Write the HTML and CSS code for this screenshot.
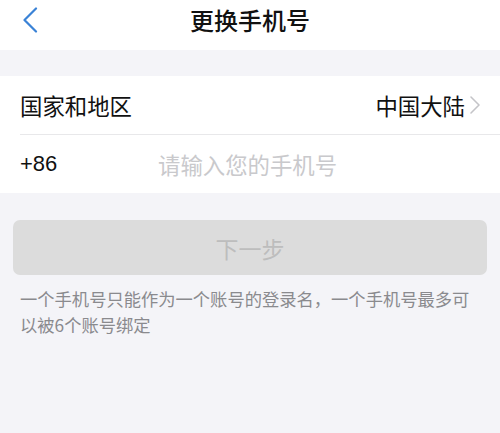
FILE: index.html
```html
<!DOCTYPE html>
<html lang="zh-CN">
<head>
    <meta charset="UTF-8">
    <meta name="viewport" content="width=device-width, initial-scale=1.0">
    <title>更换手机号</title>
    <link rel="stylesheet" href="styles.css">
</head>
<body>
    <header class="nav-bar">
        <a class="back" href="#">
            <svg width="16" height="26" viewBox="0 0 16 26">
                <path d="M14 1.5 L2.5 13 L14 24.5" fill="none" stroke="#3a82d6" stroke-width="2.2" stroke-linecap="round" stroke-linejoin="round"/>
            </svg>
        </a>
        <h1>更换手机号</h1>
    </header>

    <main>
        <section class="form-group">
            <div class="row">
                <span class="label">国家和地区</span>
                <span class="value">中国大陆
                    <svg class="chevron" width="12" height="20" viewBox="0 0 12 20">
                        <path d="M2 2 L10 10 L2 18" fill="none" stroke="#c4c4c8" stroke-width="1.6" stroke-linecap="round" stroke-linejoin="round"/>
                    </svg>
                </span>
            </div>
            <div class="row">
                <span class="label code">+86</span>
                <input class="phone-input" type="tel" placeholder="请输入您的手机号">
            </div>
        </section>

        <button class="next-button" disabled>下一步</button>

        <p class="note">一个手机号只能作为一个账号的登录名，一个手机号最多可以被6个账号绑定</p>
    </main>
</body>
</html>
```

FILE: styles.css
```css
body {
    font-family: "Noto Sans CJK SC", "Liberation Sans", sans-serif;
    margin: 0;
    padding: 0;
    background-color: #f4f4f8;
    color: #111111;
    width: 500px;
    height: 433px;
    overflow: hidden;
}

.nav-bar {
    position: relative;
    height: 50px;
    background-color: #ffffff;
    display: flex;
    align-items: center;
    justify-content: center;
}

.nav-bar h1 {
    margin: 0;
    font-size: 24px;
    font-weight: 500;
    line-height: 1;
    margin-top: -10px;
}

.back {
    position: absolute;
    left: 22px;
    top: 7px;
    display: block;
    width: 16px;
    height: 26px;
}

main {
    padding-top: 26px;
}

.form-group {
    background-color: #ffffff;
    padding-left: 20px;
}

.row {
    height: 58px;
    display: flex;
    align-items: center;
    padding-right: 20px;
    font-size: 22.4px;
}

.row + .row {
    border-top: 1px solid #e8e8ea;
}

.label {
    flex: 1;
}

.value {
    display: flex;
    align-items: center;
    gap: 4px;
}

.chevron {
    margin-right: -1px;
}

.code {
    flex: 0 0 138px;
    font-family: "Liberation Sans", sans-serif;
    font-size: 22px;
}

.phone-input {
    flex: 1;
    border: none;
    outline: none;
    padding: 0;
    font-family: "Noto Sans CJK SC", sans-serif;
    font-size: 22.4px;
    background: transparent;
}

.phone-input::placeholder {
    color: #c9c9cc;
}

.next-button {
    display: block;
    margin: 27px 13px 0;
    width: 474px;
    height: 55px;
    border: none;
    border-radius: 7px;
    background-color: #dcdcdc;
    color: #bdbdbd;
    font-family: "Noto Sans CJK SC", sans-serif;
    font-size: 23px;
}

.note {
    margin: 11px 20px 0;
    font-size: 17.3px;
    line-height: 26px;
    color: #8a8a8e;
}
```
